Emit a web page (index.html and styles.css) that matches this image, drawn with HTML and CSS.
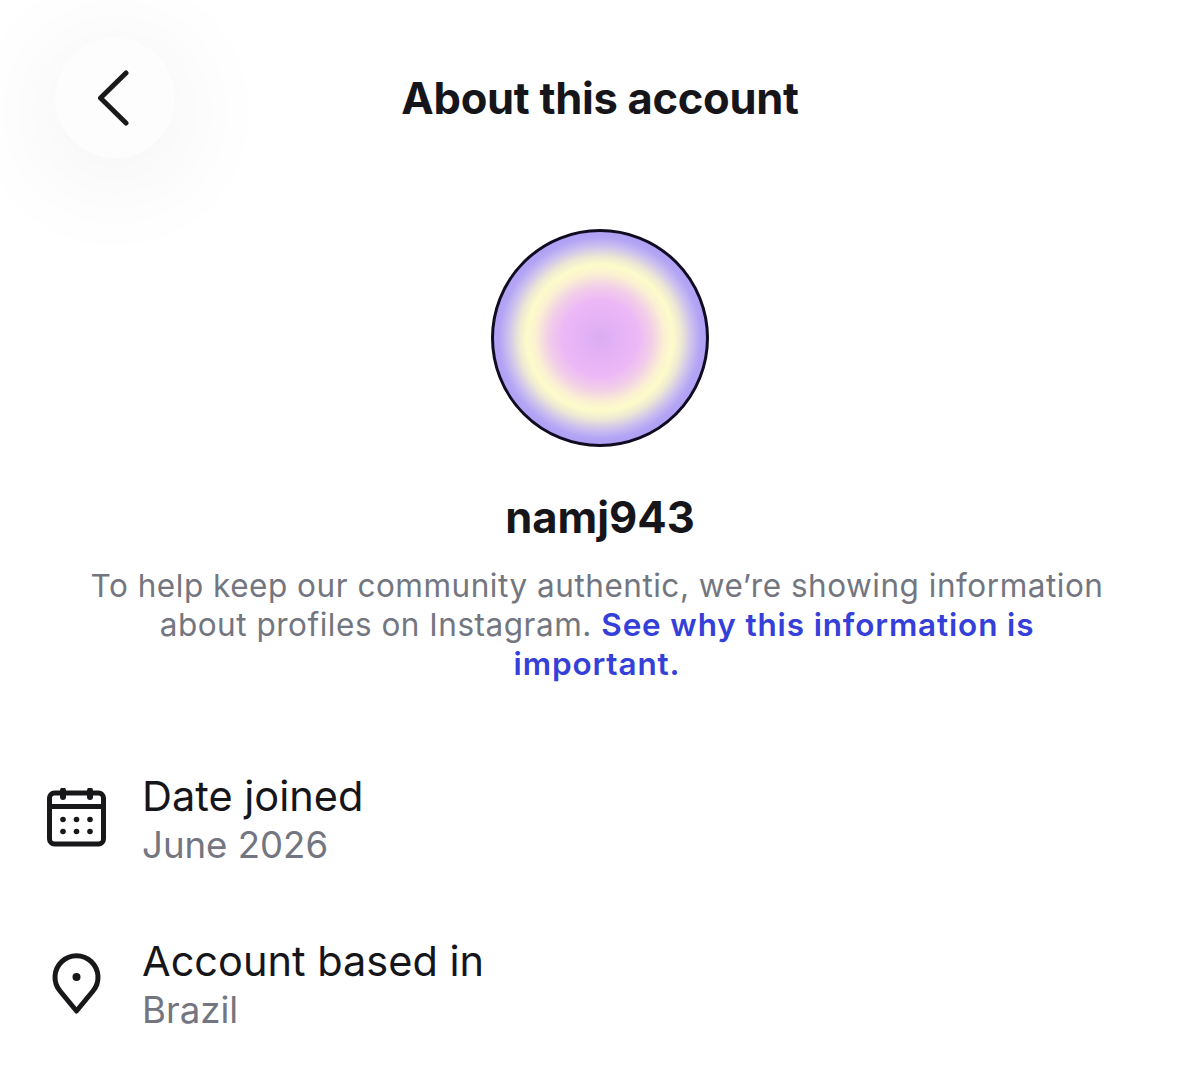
FILE: index.html
```html
<!DOCTYPE html>
<html lang="en">

<head>
    <meta charset="UTF-8">
    <meta name="viewport" content="width=device-width, initial-scale=1.0">
    <title>About this account</title>
    <link rel="stylesheet" href="styles.css">
</head>

<body>
    <!-- top bar -->
    <header class="top-bar">
        <button class="back-btn" aria-label="Back">
            <svg width="36" height="60" viewBox="0 0 36 60" fill="none" stroke="#1a1a1c" stroke-width="5" stroke-linecap="round" stroke-linejoin="round">
                <path d="M29 5 L3.500 30 L29 55"/>
            </svg>
        </button>
        <h1 class="page-title">About this account</h1>
    </header>

    <!-- profile -->
    <section class="profile">
        <div class="avatar"></div>
        <div class="username">namj943</div>
        <p class="notice">To help keep our community authentic, we&rsquo;re showing information about profiles on Instagram. <a class="notice-link" href="#">See why this information is important.</a></p>
    </section>

    <!-- account details -->
    <section class="details">
        <div class="detail-row">
            <svg class="detail-icon" width="64" height="64" viewBox="0 0 64 64" fill="none" stroke="#18181b" stroke-width="5">
                <rect x="5.500" y="5" width="54" height="51" rx="5"/>
                <path d="M5.500 18.500 H59.500"/>
                <path d="M19 2.500 V9 M46 2.500 V9" stroke-linecap="round" stroke-width="6"/>
                <g fill="#18181b" stroke="none">
                    <circle cx="19" cy="31.500" r="2.800"/><circle cx="32.500" cy="31.500" r="2.800"/><circle cx="46" cy="31.500" r="2.800"/>
                    <circle cx="19" cy="43.500" r="2.800"/><circle cx="32.500" cy="43.500" r="2.800"/><circle cx="46" cy="43.500" r="2.800"/>
                </g>
            </svg>
            <div class="detail-text">
                <div class="detail-label">Date joined</div>
                <div class="detail-value">June 2026</div>
            </div>
        </div>
        <div class="detail-row">
            <svg class="detail-icon" width="64" height="64" viewBox="0 0 64 64" fill="none" stroke="#18181b" stroke-width="5" stroke-linejoin="round">
                <path d="M32.500 58 L16 38 A21.500 21.500 0 1 1 49 38 Z"/>
                <circle cx="32.500" cy="24" r="4" fill="#18181b" stroke="none"/>
            </svg>
            <div class="detail-text">
                <div class="detail-label">Account based in</div>
                <div class="detail-value">Brazil</div>
            </div>
        </div>
    </section>
</body>

</html>
```

FILE: styles.css
```css
body {
    margin: 0;
    height: 1091px;
    overflow: hidden;
    background-color: #fff;
    font-family: Inter, "Liberation Sans", sans-serif;
    color: #16161a;
}

/* top bar */
.top-bar {
    display: flex;
    align-items: center;
    justify-content: center;
    height: 120px;
    padding-top: 38px;
    position: relative;
}

.back-btn {
    position: absolute;
    left: 55px;
    top: 38px;
    width: 120px;
    height: 120px;
    display: flex;
    align-items: center;
    justify-content: center;
    padding: 0;
    border: none;
    border-radius: 50%;
    background-color: #fdfdfd;
    box-shadow: 0 14px 100px 20px rgba(0, 0, 0, 0.045);
}

.page-title {
    margin: 0;
    font-size: 43.5px;
    font-weight: 700;
    letter-spacing: -0.3px;
}

/* profile */
.profile {
    display: flex;
    flex-direction: column;
    align-items: center;
    padding-top: 71px;
}

.avatar {
    box-sizing: border-box;
    width: 218px;
    height: 218px;
    border: 3px solid #120c22;
    border-radius: 50%;
    background: radial-gradient(circle closest-side, #d9aef2 0%, #e2b0f4 12%, #edb8f6 36%, #f2cfe8 49%, #fbf1d2 61%, #fdfbca 69%, #ece8d4 77%, #cbbfef 87%, #b3a4f5 95%, #b0a0f4 100%);
}

.username {
    margin-top: 45px;
    font-size: 43.5px;
    font-weight: 700;
    line-height: 50px;
}

.notice {
    width: 1030px;
    margin: 24px 6px 0 0;
    font-size: 31.5px;
    line-height: 39px;
    letter-spacing: 0.52px;
    text-align: center;
    color: #737680;
}

.notice-link {
    font-weight: 600;
    letter-spacing: 0.85px;
    color: #3540d9;
    text-decoration: none;
}

/* details */
.details {
    display: flex;
    flex-direction: column;
    gap: 67px;
    padding: 88px 0 0 44px;
}

.detail-row {
    display: flex;
    align-items: center;
    gap: 34px;
}

.detail-label {
    font-size: 41.5px;
    line-height: 50px;
}

.detail-value {
    font-size: 36.6px;
    line-height: 48px;
    color: #737680;
}
```
